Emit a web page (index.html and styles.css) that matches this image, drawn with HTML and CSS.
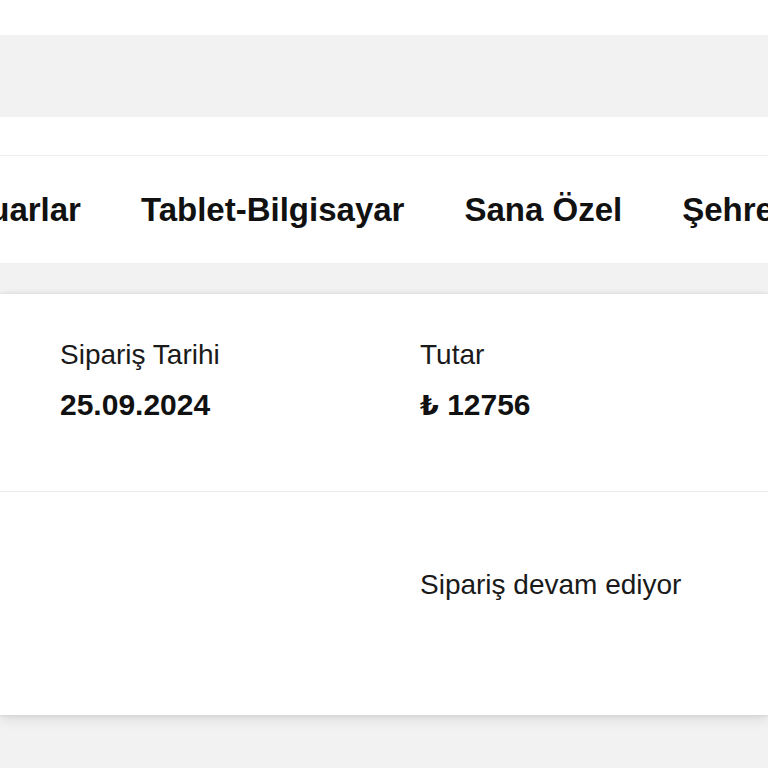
FILE: index.html
```html
<!DOCTYPE html>
<html lang="tr">
<head>
<meta charset="utf-8">
<title>Siparişlerim</title>
<link rel="stylesheet" href="styles.css">
</head>
<body>
  <div class="topbar"></div>
  <div class="band"></div>
  <div class="spacer"></div>
  <nav class="nav">
    <div class="nav-track">
      <a class="nav-item" href="#">Aksesuarlar</a>
      <a class="nav-item" href="#">Tablet-Bilgisayar</a>
      <a class="nav-item" href="#">Sana Özel</a>
      <a class="nav-item" href="#">Şehre Özel</a>
    </div>
  </nav>
  <main class="content">
    <section class="card">
      <div class="card-row card-row-head">
        <div class="field">
          <div class="label">Sipariş Tarihi</div>
          <div class="value">25.09.2024</div>
        </div>
        <div class="field">
          <div class="label">Tutar</div>
          <div class="value"><span class="lira">₺</span> 12756</div>
        </div>
      </div>
      <div class="card-row card-row-status">
        <div class="field"></div>
        <div class="field">
          <div class="label">Sipariş devam ediyor</div>
        </div>
      </div>
    </section>
  </main>
</body>
</html>
```
FILE: styles.css
```css
* { box-sizing: border-box; }

html, body {
  margin: 0;
  padding: 0;
  background: #f2f2f2;
  font-family: "Liberation Sans", Arial, sans-serif;
  color: #1a1a1a;
  overflow: hidden;
}

.topbar {
  height: 35px;
  background: #ffffff;
}

.band {
  height: 82px;
  background: #f2f2f2;
}

.spacer {
  height: 38px;
  background: #ffffff;
}

.nav {
  background: #ffffff;
  border-top: 1px solid #ececec;
  height: 108px;
  display: flex;
  align-items: center;
  overflow: hidden;
}

.nav-track {
  display: flex;
  gap: 60px;
  margin-left: -108px;
  white-space: nowrap;
}

.nav-item {
  font-size: 33px;
  font-weight: 700;
  line-height: 38px;
  color: #111111;
  text-decoration: none;
}

.content {
  padding-top: 31px;
  padding-bottom: 60px;
}

.card {
  background: #ffffff;
  box-shadow: 0 0 4px rgba(0, 0, 0, 0.10), 0 4px 12px rgba(0, 0, 0, 0.10);
}

.card-row {
  display: grid;
  grid-template-columns: 360px 1fr;
  padding: 0 60px;
}

.card-row-head {
  padding-top: 45px;
  padding-bottom: 68px;
  border-bottom: 1px solid #ebebeb;
}

.card-row-status {
  padding-top: 77px;
  padding-bottom: 114px;
}

.field {
  display: flex;
  flex-direction: column;
  gap: 17px;
}

.label {
  font-size: 28px;
  line-height: 32px;
  font-weight: 400;
  color: #1a1a1a;
}

.status {
  font-size: 28.5px;
}

.value {
  font-size: 30px;
  line-height: 34px;
  font-weight: 700;
  color: #111111;
}

.lira {
  font-family: "DejaVu Sans", sans-serif;
  font-weight: 700;
  font-size: 27px;
}
```
